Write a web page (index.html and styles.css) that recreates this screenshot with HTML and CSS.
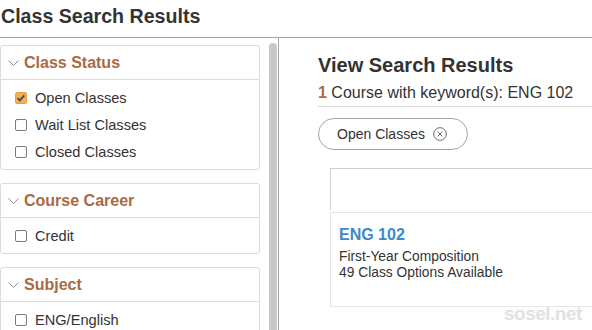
FILE: index.html
```html
<!DOCTYPE html>
<html lang="en">
<head>
  <meta charset="UTF-8" />
  <title>Class Search Results</title>
  <link rel="stylesheet" href="styles.css">
</head>
<body>

<h1 class="page-title">Class Search Results</h1>

<div class="main">
  <!-- Filters -->
  <div class="filters-pane">
    <div class="filters">
      <div class="facet">
        <div class="facet-head">
          <svg class="chev" width="11" height="6" viewBox="0 0 11 6"><polyline points="0.5,0.5 5.5,5.5 10.5,0.5" /></svg>
          <span>Class Status</span>
        </div>
        <div class="facet-body">
          <label class="opt"><span class="box checked"><svg width="12" height="12" viewBox="0 0 12 12"><path d="M2.6 6.2 L4.9 8.4 L9.3 3.4" /></svg></span>Open Classes</label>
          <label class="opt"><span class="box"></span>Wait List Classes</label>
          <label class="opt"><span class="box"></span>Closed Classes</label>
        </div>
      </div>

      <div class="facet">
        <div class="facet-head">
          <svg class="chev" width="11" height="6" viewBox="0 0 11 6"><polyline points="0.5,0.5 5.5,5.5 10.5,0.5" /></svg>
          <span>Course Career</span>
        </div>
        <div class="facet-body">
          <label class="opt"><span class="box"></span>Credit</label>
        </div>
      </div>

      <div class="facet">
        <div class="facet-head">
          <svg class="chev" width="11" height="6" viewBox="0 0 11 6"><polyline points="0.5,0.5 5.5,5.5 10.5,0.5" /></svg>
          <span>Subject</span>
        </div>
        <div class="facet-body">
          <label class="opt"><span class="box"></span>ENG/English</label>
        </div>
      </div>
    </div>
    <div class="scroll"><div class="thumb"></div></div>
  </div>

  <!-- Results -->
  <div class="results">
    <h2>View Search Results</h2>
    <p class="count"><b>1</b> Course with keyword(s): ENG 102</p>
    <div class="chips">
      <span class="chip">Open Classes
        <svg width="14" height="14" viewBox="0 0 14 14"><circle cx="7" cy="7" r="6.3" /><path d="M4.6 4.6 L9.4 9.4 M9.4 4.6 L4.6 9.4" /></svg>
      </span>
    </div>
    <div class="panel-top"></div>
    <div class="course">
      <div class="course-code">ENG 102</div>
      <div class="course-line">First-Year Composition</div>
      <div class="course-line">49 Class Options Available</div>
    </div>
  </div>
</div>

<div class="watermark">sosel.net</div>

</body>
</html>
```

FILE: styles.css
```css
body {
  font-family: "Liberation Sans", Arial, sans-serif;
  color: #333;
  background: #fff;
  margin: 0;
  height: 330px;
  overflow: hidden;
  position: relative;
}

.page-title {
  margin: 0;
  padding: 4px 0 0 1px;
  height: 33px;
  font-size: 19.6px;
  line-height: 24px;
  border-bottom: 1px solid #a3a3a3;
}

.main {
  display: flex;
  height: 292px;
}

/* left column */
.filters-pane {
  width: 278px;
  display: flex;
  flex-shrink: 0;
}

.filters {
  width: 260px;
  padding-top: 7px;
}

.facet {
  border: 1px solid #dcdcdc;
  border-radius: 3px;
  margin-bottom: 13px;
}

.facet-head {
  height: 33px;
  display: flex;
  align-items: center;
  gap: 5px;
  padding-left: 7px;
  border-bottom: 1px solid #dcdcdc;
  font-size: 16px;
  font-weight: bold;
  color: #a86b45;
}

.chev polyline {
  fill: none;
  stroke: #8a8a8a;
  stroke-width: 1;
}

.facet-body {
  padding: 4px 0;
}

.opt {
  display: flex;
  align-items: center;
  height: 27px;
  padding-left: 14px;
  font-size: 14.6px;
}

.box {
  width: 12px;
  height: 12px;
  box-sizing: border-box;
  border: 1px solid #7a7a7a;
  border-radius: 2px;
  margin-right: 8px;
  display: flex;
}

.box.checked {
  background: #f3ae52;
  border-color: #e6a04a;
}

.box svg {
  margin: -1px;
}

.box path {
  fill: none;
  stroke: #4a4a4a;
  stroke-width: 1.8;
}

.scroll {
  margin-left: 9px;
  width: 8px;
  padding-top: 5px;
}

.thumb {
  height: 100%;
  background: #c8c8c8;
  border-radius: 4px 4px 0 0;
}

/* right column */
.results {
  flex: 1;
  border-left: 1px solid #a3a3a3;
  padding-left: 39px;
  overflow: hidden;
}

.results h2 {
  margin: 15px 0 0;
  font-size: 20px;
  line-height: 24px;
}

.count {
  margin: 6px 0 0;
  font-size: 16px;
  line-height: 20px;
  padding-bottom: 3px;
  border-bottom: 1px solid #dcdcdc;
}

.count b {
  color: #a86b45;
}

.chips {
  display: flex;
  margin-top: 11px;
}

.chip {
  display: inline-flex;
  align-items: center;
  gap: 8px;
  height: 32px;
  box-sizing: border-box;
  padding: 0 20px 0 18px;
  border: 1px solid #a6a6a6;
  border-radius: 16px;
  font-size: 14px;
}

.chip circle,
.chip path {
  fill: none;
  stroke: #6a6a6a;
  stroke-width: 1;
}

.panel-top {
  margin: 18px 0 0 12px;
  height: 41px;
  border-top: 1px solid #cfcfcf;
  border-left: 1px solid #cfcfcf;
}

.course {
  margin: 2px 0 0 12px;
  border: 1px solid #e6e6e6;
  border-right: none;
  padding: 12px 0 25px 8px;
}

.course-code {
  font-size: 16px;
  font-weight: bold;
  line-height: 20px;
  color: #3d89c6;
  margin-bottom: 4px;
}

.course-line {
  font-size: 13.8px;
  line-height: 16px;
}

.watermark {
  position: absolute;
  left: 504px;
  top: 303px;
  font-size: 19px;
  font-weight: bold;
  color: #e2e2e2;
  letter-spacing: -0.5px;
}
```
